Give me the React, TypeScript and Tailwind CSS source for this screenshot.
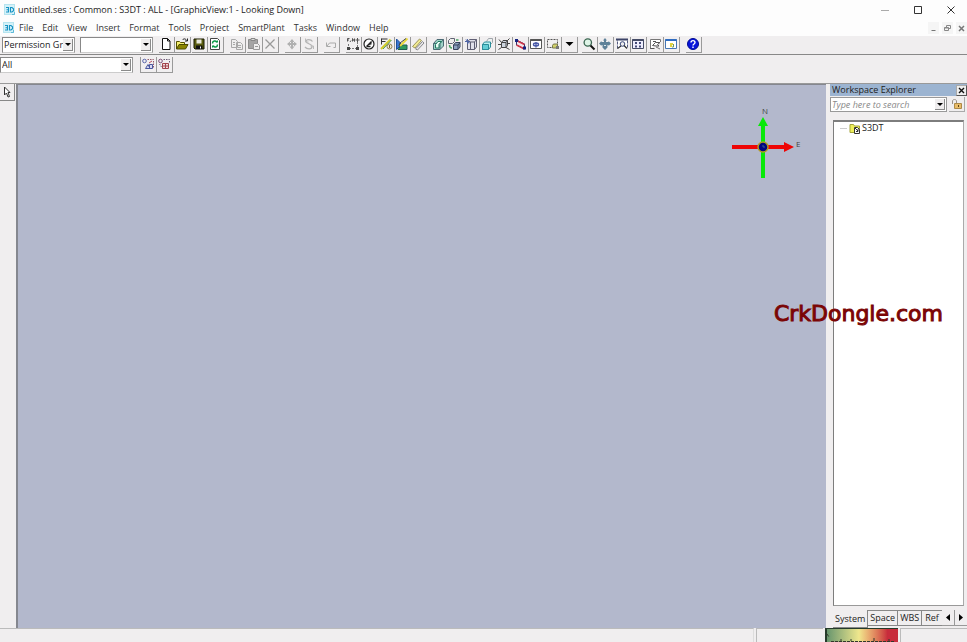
import { useState } from "react";
import type { ReactNode } from "react";
import clsx from "clsx";

const MENUS = [
  "File",
  "Edit",
  "View",
  "Insert",
  "Format",
  "Tools",
  "Project",
  "SmartPlant",
  "Tasks",
  "Window",
  "Help",
];

const TABS = ["System", "Space", "WBS", "Ref"];

type Tool = { label: string; icon: ReactNode; disabled?: boolean };

const Icon = ({ children }: { children: ReactNode }) => (
  <svg viewBox="0 0 14 14" className="h-[14px] w-[14px] shrink-0" fill="none" stroke="#222" strokeWidth="1">
    {children}
  </svg>
);

const AppLogo = () => (
  <svg viewBox="0 0 12 12" className="h-3 w-3 shrink-0" fill="none">
    <rect x="0.5" y="0.5" width="10" height="10" fill="#d4f1f8" stroke="#b5e4ef" />
    <path d="M2 3.500h2.500v4.500H2M2.500 5.700h2M6.500 3.500h1.500l1.500 1.200v2L8 8H6.500z" stroke="#1793c4" strokeWidth="1.100" />
    <path d="M8 10.500h2.500V8" stroke="#5cb9d8" />
  </svg>
);

const fileTools: Tool[] = [
  {
    label: "New",
    icon: <Icon><path d="M3.500 1.500h5l2.500 2.500v8.500H3.500zM8.500 1.500V4H11" fill="#fff" stroke="#111" /></Icon>,
  },
  {
    label: "Open",
    icon: (
      <Icon>
        <path d="M1.500 12V4.500h3l1 1h4v2" fill="#f5ef71" stroke="#555000" />
        <path d="M1.500 12l2.500-4.500h9L10.500 12z" fill="#8b8500" stroke="#4c4a00" />
        <path d="M7.500 3c1.500-2 3.500-1 4 .5M12.500 1.500v2.500H10" stroke="#222" />
      </Icon>
    ),
  },
  {
    label: "Save",
    icon: (
      <Icon>
        <path d="M2 2h10v10H3l-1-1z" fill="#5b5e10" stroke="#161800" />
        <path d="M4.500 2.500h5v4h-5z" fill="#e8e8dd" stroke="none" />
        <path d="M4 8.500h6.500V12H4z" fill="#111" stroke="none" />
        <path d="M8.500 9.500v2" stroke="#fff" />
      </Icon>
    ),
  },
  {
    label: "Refresh",
    icon: (
      <Icon>
        <path d="M2.500 1.500h7l2 2v9h-9z" fill="#fff" stroke="#444" />
        <path d="M4.500 6.500c0-3 3-3 4.500-1.500M9.500 7.500c0 3-3 3-4.500 1.500" stroke="#0a9a46" strokeWidth="1.500" />
        <path d="M7.500 5.500H10V3zM6.500 8.500H4V11z" fill="#0a9a46" stroke="none" />
      </Icon>
    ),
  },
];

const editTools: Tool[] = [
  {
    label: "Copy",
    disabled: true,
    icon: (
      <Icon>
        <path d="M1.500 2.500h4l2 2v6h-6zM6.500 5.500h4l2 2v5h-6z" fill="#eee" stroke="#a8a8a8" />
        <path d="M3 5.500h2M3 7.500h2M8 8.500h3M8 10.500h3" stroke="#a8a8a8" />
      </Icon>
    ),
  },
  {
    label: "Paste",
    disabled: true,
    icon: (
      <Icon>
        <path d="M1.500 2.500h9v9h-9z" fill="#a5a5a5" stroke="#8c8c8c" />
        <path d="M4 1.500h4v2H4z" fill="#ddd" stroke="#888" />
        <path d="M6.500 6.500h4l2 2v4h-6z" fill="#eee" stroke="#999" />
        <path d="M8 9.500h3" stroke="#999" />
      </Icon>
    ),
  },
  {
    label: "Delete",
    disabled: true,
    icon: <Icon><path d="M2.500 2.500l9 9M11.500 2.500l-9 9" stroke="#999" strokeWidth="1.300" /></Icon>,
  },
];

const moveTools: Tool[] = [
  {
    label: "Move",
    disabled: true,
    icon: (
      <Icon>
        <path d="M7 3v8M3 7h8" stroke="#b0b0b0" strokeWidth="2" />
        <path d="M7 2l2.500 3h-5zM7 12.500L4.500 9.500h5zM2 7l3-2.500v5zM12 7L9 4.500v5z" fill="#b0b0b0" stroke="none" />
      </Icon>
    ),
  },
  {
    label: "Rotate",
    disabled: true,
    icon: (
      <Icon>
        <path d="M10.500 4.500C9 2 4 2 4 4.500s6 2 6 5-5 3-7 .5" stroke="#b3b3b3" strokeWidth="1.300" />
        <path d="M3.500 1.500V5h3M11.500 12V9H8.500" stroke="#bbb" />
      </Icon>
    ),
  },
];

const undoTools: Tool[] = [
  {
    label: "Undo",
    disabled: true,
    icon: <Icon><path d="M2.500 5.500v4h4M3 9l2.500-3h6v4.500h-2" stroke="#aaa" /></Icon>,
  },
];

const sketchTools: Tool[] = [
  {
    label: "PinPoint",
    icon: (
      <Icon>
        <path d="M2.500 7v4M3 11.500h8M11.500 5v6" stroke="#777" strokeDasharray="2 1" />
        <path d="M1 10h3v3H1zM10 10h3v3h-3z" fill="#444" stroke="none" />
        <path d="M1.500 1.500v3M1.500 1.500h2M1.500 3h1.500M4 5l1-1.500M6.500 4.500v-3l2 3v-3M11.500 1v4M9.500 3h4" stroke="#555" />
      </Icon>
    ),
  },
  {
    label: "Point Along",
    icon: (
      <Icon>
        <circle cx="7" cy="7" r="5" fill="#fff" stroke="#222" strokeWidth="1.200" />
        <path d="M4.500 9.500L9.500 4.500M4.500 9.500h4" stroke="#222" strokeWidth="1.300" />
        <path d="M9.500 4.500v3L6 8z" fill="#222" stroke="none" />
      </Icon>
    ),
  },
  {
    label: "Measure",
    icon: (
      <Icon>
        <path d="M2.500 1.500v6M2.500 2h6M2.500 4.500h4" stroke="#333" />
        <path d="M2 12L11.500 2.500" stroke="#d5cb28" strokeWidth="2" />
        <path d="M4 12l8.500-9" stroke="#4a9a5c" />
        <circle cx="10.500" cy="9.500" r="2.500" fill="#efe9cf" stroke="#8f8152" />
        <path d="M10.500 8v3" stroke="#776430" />
      </Icon>
    ),
  },
  {
    label: "Define Coordinate System",
    icon: (
      <Icon>
        <path d="M1.500 2v10.500l4-4V6z" fill="#3878d0" stroke="#1c4f9e" />
        <path d="M3 12.500L6.500 8H12v4.500z" fill="#2f9a5d" stroke="#1c5b4e" />
        <path d="M5 9L12.500 1.500" stroke="#e9d93c" strokeWidth="2" />
        <path d="M4 9l1-3 6-4.500" stroke="#444" />
      </Icon>
    ),
  },
  {
    label: "Ruler",
    icon: (
      <Icon>
        <path d="M1.500 9.500l7-7.500 2 1.500L4 11z" fill="#f2eb93" stroke="#9b955a" />
        <path d="M4.500 12l7-7.500 1.500 1.500L6.500 13z" fill="#e8e8e8" stroke="#88888e" />
      </Icon>
    ),
  },
];

const viewTools: Tool[] = [
  {
    label: "Volume",
    icon: (
      <Icon>
        <path d="M2.500 6.500L6 2.500h6.500V9L9 12.500H2.500z" fill="#9ed3c6" stroke="#4b6a74" />
        <path d="M2.500 6.500H9v6M9 6.500l3.500-4" stroke="#4b6a74" />
        <path d="M4.500 7.500L7 4.500h3.500L8 7.500v3.500H4.500z" fill="#e8fbf4" stroke="#217a62" />
      </Icon>
    ),
  },
  {
    label: "Clip by Object",
    icon: (
      <Icon>
        <path d="M1.500 3.500l2-2h4v3l-2 2h-4z" fill="#eee" stroke="#5f6472" />
        <path d="M6.500 8l2-2.500h4.500v4.500L11 12.500H6.500z" fill="#8ca0c0" stroke="#36425b" />
        <path d="M6.500 8H11v4.500M11 8l2-2.500" stroke="#36425b" />
        <path d="M2.500 8c0 2.500 1 3 2.500 3M9 3h2.500" stroke="#49a362" strokeWidth="1.500" />
      </Icon>
    ),
  },
  {
    label: "Clear Clipping",
    icon: (
      <Icon>
        <path d="M3.500 5l2-2.500h7V10l-2 2.500h-7z" fill="#e2e2ec" stroke="#606074" />
        <path d="M3.500 5h7v7.500M10.500 5l2-2.500M6.500 5v7.500" stroke="#606074" />
        <path d="M1 4.500h5M3.500 2v5M2 2.500l3 4" stroke="#5065a5" />
      </Icon>
    ),
  },
  {
    label: "Hide",
    icon: (
      <Icon>
        <path d="M6.500 4.500l2-3h4v4l-2 2" fill="#eef2f2" stroke="#a0a5aa" />
        <path d="M2.500 7.500l2-2.500h6v5L8.500 12.500h-6z" fill="#baf0f0" stroke="#2b8d99" />
        <path d="M2.500 7.500h6v5h-6z" fill="#62cdd4" stroke="#2b8d99" />
      </Icon>
    ),
  },
  {
    label: "Show",
    icon: (
      <Icon>
        <path d="M4.500 5.500l1.500-2h4.500v5L9 10.500H4.500zM4.500 5.500H9v5M9 5.500l1.500-2" fill="#cdd5df" stroke="#444" />
        <path d="M4.500 5.500L2 2.500M10.500 3.500l2-2M4.500 10.500l-3 2M9 10.500l3.500 2M1 7.500h3M10.500 6.500H13" stroke="#444" />
      </Icon>
    ),
  },
  {
    label: "Rotate View",
    icon: (
      <Icon>
        <path d="M3.500 3l8 4v5l-8-4z" fill="#f2e4ea" stroke="#33336b" />
        <path d="M3.500 3.500l8 4M3.500 8l8 4" stroke="#d03548" strokeWidth="1.500" />
        <path d="M2 2h3v3H2zM10 9.500h3v3h-3z" fill="#17237f" stroke="none" />
      </Icon>
    ),
  },
  {
    label: "Common Views",
    icon: (
      <Icon>
        <path d="M1.500 2.500h11v9h-11z" fill="#fff" stroke="#555" />
        <path d="M1.500 3h11" stroke="#555" strokeWidth="2" />
        <path d="M4.500 7.500c0-2 5-2 5 0s-5 2-5 0M7 5v5.500" stroke="#4a5aa8" strokeWidth="1.400" />
      </Icon>
    ),
  },
  {
    label: "Select Fence",
    icon: (
      <Icon>
        <path d="M1.500 2.500h10v8h-10z" stroke="#555" strokeDasharray="2 1" />
        <path d="M6.500 8.500l1-1.500h4v4h-5z" fill="#d0cf6a" stroke="#77784c" />
        <path d="M10 9h3v3h-3z" fill="#777" stroke="none" />
      </Icon>
    ),
  },
  { label: "More views", icon: <Icon><path d="M3.500 5h8l-4 4z" fill="#000" stroke="none" /></Icon> },
];

const zoomTools: Tool[] = [
  {
    label: "Zoom",
    icon: (
      <Icon>
        <circle cx="5.800" cy="5.500" r="3.700" fill="#dff4e7" stroke="#3b6651" strokeWidth="1.300" />
        <path d="M8.500 8.500l4 4" stroke="#111" strokeWidth="2" />
      </Icon>
    ),
  },
  {
    label: "Pan",
    icon: (
      <Icon>
        <path d="M7 1l2 2.500H8V5h2.500V4L13 6.500 10.500 9V8H9.500v2.500L7 13l-2.500-2.500V8h-1v1L1 6.500 3.500 4v1H6V3.500H5z" fill="#5f8299" stroke="none" />
        <path d="M6 8.500h2" stroke="#dce9ee" />
      </Icon>
    ),
  },
  {
    label: "Zoom Area",
    icon: (
      <Icon>
        <path d="M2.500 11.500v-9h10v9" fill="#fff" stroke="#555b80" strokeDasharray="3 1" />
        <path d="M1 2.500h12" stroke="#3d4468" strokeWidth="2" />
        <circle cx="7.500" cy="7" r="2.300" fill="#eee" stroke="#3a487a" />
        <path d="M9 8.500l3 3M2.500 11.500L6 9" stroke="#333" strokeWidth="1.300" />
      </Icon>
    ),
  },
  {
    label: "Fit",
    icon: (
      <Icon>
        <path d="M1.500 2.500h11v9h-11z" fill="#eef" stroke="#444b66" />
        <path d="M1.500 3h11" stroke="#444b66" strokeWidth="2" />
        <path d="M4 5h2v2H4zM8 5h2v2H8zM4 8.500h2v2H4zM8 8.500h2v2H8z" fill="#444a78" stroke="none" />
      </Icon>
    ),
  },
  {
    label: "Previous View",
    icon: (
      <Icon>
        <path d="M2.500 12V2.500h10V5" fill="#fff" stroke="#777" />
        <path d="M2.500 11.500h4M4.500 8.500l3-3h4.500l-2.500 2 1.500 1.500H8zM5 4.500h3" stroke="#555" />
        <path d="M8 10l4 2" stroke="#777" />
      </Icon>
    ),
  },
  {
    label: "Refresh View",
    icon: (
      <Icon>
        <path d="M1.500 2.500h11v9h-11z" fill="#fff" stroke="#4676b4" />
        <path d="M1.500 3h11" stroke="#2f6cc0" strokeWidth="2" />
        <path d="M6 6h3v2H8v2H6z" fill="#e0d33e" stroke="none" />
        <path d="M9.500 7v3H8" stroke="#6f9a61" />
      </Icon>
    ),
  },
];

const helpTools: Tool[] = [
  {
    label: "Help",
    icon: (
      <Icon>
        <circle cx="7" cy="7" r="5.500" fill="#0714dc" stroke="#020c91" />
        <path d="M5 5.500c0-2.500 4-2.500 4 0 0 1.500-2 1.500-2 3M7 9.500V11" stroke="#fff" strokeWidth="1.400" />
      </Icon>
    ),
  },
];

const filterTools: Tool[] = [
  {
    label: "Locate Filter",
    icon: (
      <Icon>
        <circle cx="3.500" cy="4" r="1.800" stroke="#5a66ab" />
        <path d="M4.500 11.500l2.500-4 2 4zM8.500 7.500h3v4h-3z" fill="#d6d8f2" stroke="#4a579d" />
        <path d="M6.500 2.500h6v9" stroke="#93596a" strokeDasharray="1.500 1" />
        <path d="M8 6l3-2" stroke="#b54c5d" />
      </Icon>
    ),
  },
  {
    label: "Inside Filter",
    icon: (
      <Icon>
        <circle cx="3.500" cy="4" r="1.800" stroke="#7d4f76" />
        <path d="M5.500 6.500h6v5h-6zM8.500 6v6M5.500 9h6" fill="#f0dbdc" stroke="#a2444c" />
        <path d="M6.500 2.500h6v3M2.500 7l2 3" stroke="#6c5a75" strokeDasharray="1.500 1" />
      </Icon>
    ),
  },
];

const ToolGroup = ({ tools, className }: { tools: Tool[]; className?: string }) => (
  <div className={clsx("flex shrink-0 justify-between", className)}>
    {tools.map((tool) => (
      <button
        key={tool.label}
        type="button"
        aria-label={tool.label}
        disabled={tool.disabled}
        className="flex h-4 w-4 items-start justify-start border-r border-b border-[#9a9a9a] bg-[#f1eff0]"
      >
        {tool.icon}
      </button>
    ))}
  </div>
);

const ArrowBox = () => (
  <span className="pointer-events-none absolute inset-y-px right-px flex w-[10px] items-center justify-center border-r border-b border-[#8a8a8a] bg-[#efedee]">
    <svg viewBox="0 0 6 3" className="h-[3px] w-[6px]">
      <path d="M0 0h6L3 3z" fill="#000" />
    </svg>
  </span>
);

const Combo = ({ label, options, className }: { label: string; options: string[]; className?: string }) => (
  <div className={clsx("relative h-4 shrink-0 border border-t-[#888] border-l-[#888] border-r-[#999] border-b-[#ccc] bg-white", className)}>
    <select
      aria-label={label}
      className="block h-full w-full appearance-none overflow-hidden bg-transparent pr-2 pl-px text-[9px] leading-[14px] text-[#222] outline-none"
    >
      {options.map((o) => (
        <option key={o}>{o}</option>
      ))}
    </select>
    <ArrowBox />
  </div>
);

const TitleBar = () => (
  <header className="flex h-5 shrink-0 items-center bg-[#fdfdfd] pl-1">
    <AppLogo />
    <h1 className="ml-0.5 flex-1 whitespace-nowrap text-[9px] text-[#222]">
      untitled.ses : Common : S3DT : ALL - [GraphicView:1 - Looking Down]
    </h1>
    <div className="flex">
      <button type="button" aria-label="Minimize" className="flex h-5 w-[33px] items-center justify-center">
        <svg viewBox="0 0 8 8" className="h-2 w-2" stroke="#aaa"><path d="M0 4.500h8" /></svg>
      </button>
      <button type="button" aria-label="Maximize" className="flex h-5 w-[33px] items-center justify-center">
        <svg viewBox="0 0 8 8" className="h-2 w-2" fill="none" stroke="#333"><path d="M.5 .5h7v7h-7z" /></svg>
      </button>
      <button type="button" aria-label="Close" className="flex h-5 w-[33px] items-center justify-center">
        <svg viewBox="0 0 8 8" className="h-2 w-2" stroke="#333"><path d="M.5 .5l7 7M7.500 .5l-7 7" /></svg>
      </button>
    </div>
  </header>
);

const MenuBar = () => (
  <nav className="flex h-4 shrink-0 items-center bg-[#fdfdfd] pl-[3px]">
    <AppLogo />
    <div className="ml-1 flex flex-1 gap-[9px]">
      {MENUS.map((menu) => (
        <button key={menu} type="button" className="text-[9px] leading-4 text-[#333]">
          {menu}
        </button>
      ))}
    </div>
    <div className="flex gap-[3px]">
      <button type="button" aria-label="Minimize view" className="flex h-3 w-[11px] items-center justify-center bg-[#f5f5f5]">
        <svg viewBox="0 0 7 7" className="h-[7px] w-[7px]" stroke="#777"><path d="M1.500 5.500h4" /></svg>
      </button>
      <button type="button" aria-label="Restore view" className="flex h-3 w-[11px] items-center justify-center bg-[#f5f5f5]">
        <svg viewBox="0 0 7 7" className="h-[7px] w-[7px]" fill="none" stroke="#888"><path d="M2.500 2.500v-2h4v3h-2M.5 2.500h4v3h-4zM.5 3h4" /></svg>
      </button>
      <button type="button" aria-label="Close view" className="flex h-3 w-[11px] items-center justify-center bg-[#f5f5f5]">
        <svg viewBox="0 0 7 7" className="h-[7px] w-[7px]" stroke="#777" strokeWidth="1.500"><path d="M1 1l5 5M6 1L1 6" /></svg>
      </button>
    </div>
  </nav>
);

const Compass = () => (
  <svg viewBox="0 0 76 80" className="absolute top-4 right-5 h-20 w-[76px]">
    <path d="M31 25h4v52h-4z" fill="#08e908" />
    <path d="M33 16l5 9H28z" fill="#08e908" />
    <path d="M2 44h54v4H2z" fill="#ee0505" />
    <path d="M54 41l10 5-10 5z" fill="#ee0505" />
    <circle cx="33" cy="46" r="5" fill="#020680" stroke="#b39b24" strokeWidth="1.500" />
    <path d="M33 46v-2M33 46h2" stroke="#365e8c" />
    <text x="32" y="13" fontSize="8" fill="#444">N</text>
    <text x="66" y="46" fontSize="8" fill="#444">E</text>
  </svg>
);

const FolderIcon = () => (
  <svg viewBox="0 0 12 12" className="h-3 w-3" fill="none">
    <path d="M1 10.500V2.500h3.500l1 1.500h5v6.500z" fill="#eff05b" stroke="#a3a339" />
    <path d="M5.500 5.500h3l2 2v4h-5z" fill="#fff" stroke="#333" />
    <path d="M6 6l3 3M9 7v2.500H7" stroke="#333" />
  </svg>
);

const WorkspaceExplorer = () => {
  const [search, setSearch] = useState("");
  const [activeTab, setActiveTab] = useState("System");

  return (
    <aside className="flex w-[137px] shrink-0 flex-col">
      <div className="flex h-3 items-center justify-between bg-[#9cb4d1] pl-0.5">
        <h2 className="text-[9px] leading-[10px] text-[#222]">Workspace Explorer</h2>
        <button type="button" aria-label="Close explorer" className="flex h-[11px] w-[11px] items-center justify-center border border-[#aaa] border-r-[#555] border-b-[#555] bg-[#eee]">
          <svg viewBox="0 0 7 7" className="h-[7px] w-[7px]" stroke="#111" strokeWidth="1.400"><path d="M1 1l5 5M6 1L1 6" /></svg>
        </button>
      </div>

      <div className="mt-px flex h-[15px] gap-0.5">
        <div className="relative w-[117px] border border-[#999] bg-white">
          <input
            type="text"
            aria-label="Search workspace"
            value={search}
            onChange={(e) => setSearch(e.target.value)}
            placeholder="Type here to search"
            className="block h-full w-full bg-transparent pr-3 pl-px text-[9px] italic outline-none placeholder:text-[#888]"
          />
          <ArrowBox />
        </div>
        <button type="button" aria-label="Lock" className="flex w-4 items-center justify-center border-r border-b border-[#aaa]">
          <svg viewBox="0 0 12 12" className="h-3 w-3" fill="none">
            <path d="M1.500 6V3c0-2 4-2 4 0v2.500" stroke="#99928a" />
            <path d="M3.500 5.500h7v5h-7z" fill="#e9bc68" stroke="#ad8a48" />
            <path d="M7.500 7v2" stroke="#5d4315" />
          </svg>
        </button>
      </div>

      <div className="mx-[3px] mt-2 flex-1 border border-t-2 border-[#7d7d7d] border-r-[#aaa] border-b-[#999] bg-white">
        <ul className="pl-1.5">
          <li className="flex h-3 items-center">
            <span className="mr-0.5 w-[7px] border-t border-[#ccc]" />
            <FolderIcon />
            <span className="ml-px text-[9px] text-[#222]">S3DT</span>
          </li>
        </ul>
      </div>

      <div className="mt-1 flex h-[18px] items-start pl-[3px]">
        {TABS.map((tab) => (
          <button
            key={tab}
            type="button"
            onClick={() => setActiveTab(tab)}
            className={clsx(
              "overflow-hidden border-r border-b border-[#888] text-[9px] text-[#222]",
              activeTab === tab ? "h-[18px]" : "h-4 border-t",
              tab === "Ref" ? "w-5 border-r-0 pl-[3px] text-left" : "px-0.5"
            )}
          >
            {tab}
          </button>
        ))}
        <button type="button" aria-label="Previous tab" className="flex h-4 flex-1 items-center justify-center border-r border-b border-[#999]">
          <svg viewBox="0 0 4 7" className="h-[7px] w-1"><path d="M4 0v7L0 3.500z" /></svg>
        </button>
        <button type="button" aria-label="Next tab" className="flex h-4 flex-1 items-center justify-center border-b border-[#999]">
          <svg viewBox="0 0 4 7" className="h-[7px] w-1"><path d="M0 0v7l4-3.500z" /></svg>
        </button>
      </div>
    </aside>
  );
};

const StatusBar = () => (
  <footer className="flex h-[14px] shrink-0 gap-0.5 bg-[#f0eeef]">
    <div className="flex-1 border-t border-r border-t-[#bbb] border-r-[#ddd]" />
    <div className="w-[67px] border-t border-l border-[#bbb]" />
    <div className="w-[73px] border-t border-l-2 border-[#263b2b] bg-linear-to-r from-[#68966e] via-[#efe78d] via-45% to-[#c82c3c] to-85%">
      <svg viewBox="0 0 71 13" className="h-[13px] w-full" preserveAspectRatio="none" stroke="#33382b">
        <path d="M0 5l2 3M4 12.500h64" strokeDasharray="3 1" />
        <path d="M14 12v-2M24 12v-2M47 12v-3M62 12v-2" />
      </svg>
    </div>
    <div className="w-[67px] border-t border-l border-[#bbb]" />
  </footer>
);

const App = () => {
  return (
    <div className="relative flex h-screen flex-col overflow-hidden bg-[#f0eeef] font-['Open_Sans','Noto_Sans',sans-serif]">
      <TitleBar />
      <MenuBar />

      <div className="flex h-[19px] shrink-0 items-center border-b border-[#888] pl-0.5">
        <Combo label="Permission group" options={["Permission Group"]} className="w-[73px]" />
        <Combo label="Style" options={[""]} className="ml-[5px] w-[73px]" />
        <ToolGroup tools={fileTools} className="ml-1.5 w-[65px]" />
        <ToolGroup tools={editTools} className="ml-1.5 w-[49px]" />
        <ToolGroup tools={moveTools} className="ml-1.5 w-[33px]" />
        <ToolGroup tools={undoTools} className="ml-1.5 w-4" />
        <ToolGroup tools={sketchTools} className="ml-1.5 w-[81px]" />
        <ToolGroup tools={viewTools} className="ml-1 w-[147px]" />
        <ToolGroup tools={zoomTools} className="ml-1 w-[98px]" />
        <ToolGroup tools={helpTools} className="ml-1.5 w-4" />
      </div>
      <div className="flex h-7 shrink-0 items-start pt-0.5">
        <Combo label="Select filter" options={["All"]} className="w-[133px]" />
        <ToolGroup tools={filterTools} className="ml-[7px] w-[33px] border-l border-[#999]" />
      </div>

      <main className="flex min-h-0 flex-1 border-t border-[#999]">
        <div className="w-4 shrink-0">
          <button type="button" aria-label="Select" className="flex h-[17px] w-[15px] items-center justify-center border-r border-b border-[#888]">
            <svg viewBox="0 0 8 12" className="h-3 w-2" fill="#fff" stroke="#333">
              <path d="M1.500 1v8l2-2 1.500 4 1.500-.5-1.500-4h2z" />
            </svg>
          </button>
        </div>
        <section aria-label="Graphic view" className="relative mr-1 flex-1 border-t border-l-2 border-[#85878f] bg-[#b3b8cc]">
          <Compass />
        </section>
        <WorkspaceExplorer />
      </main>

      <StatusBar />

      <p className="absolute top-[300px] right-6 font-['DejaVu_Sans',sans-serif] text-[22px] leading-7 text-[#7b0505] [-webkit-text-stroke:1px_#7b0505]">
        CrkDongle.com
      </p>
    </div>
  );
};

export default App;
